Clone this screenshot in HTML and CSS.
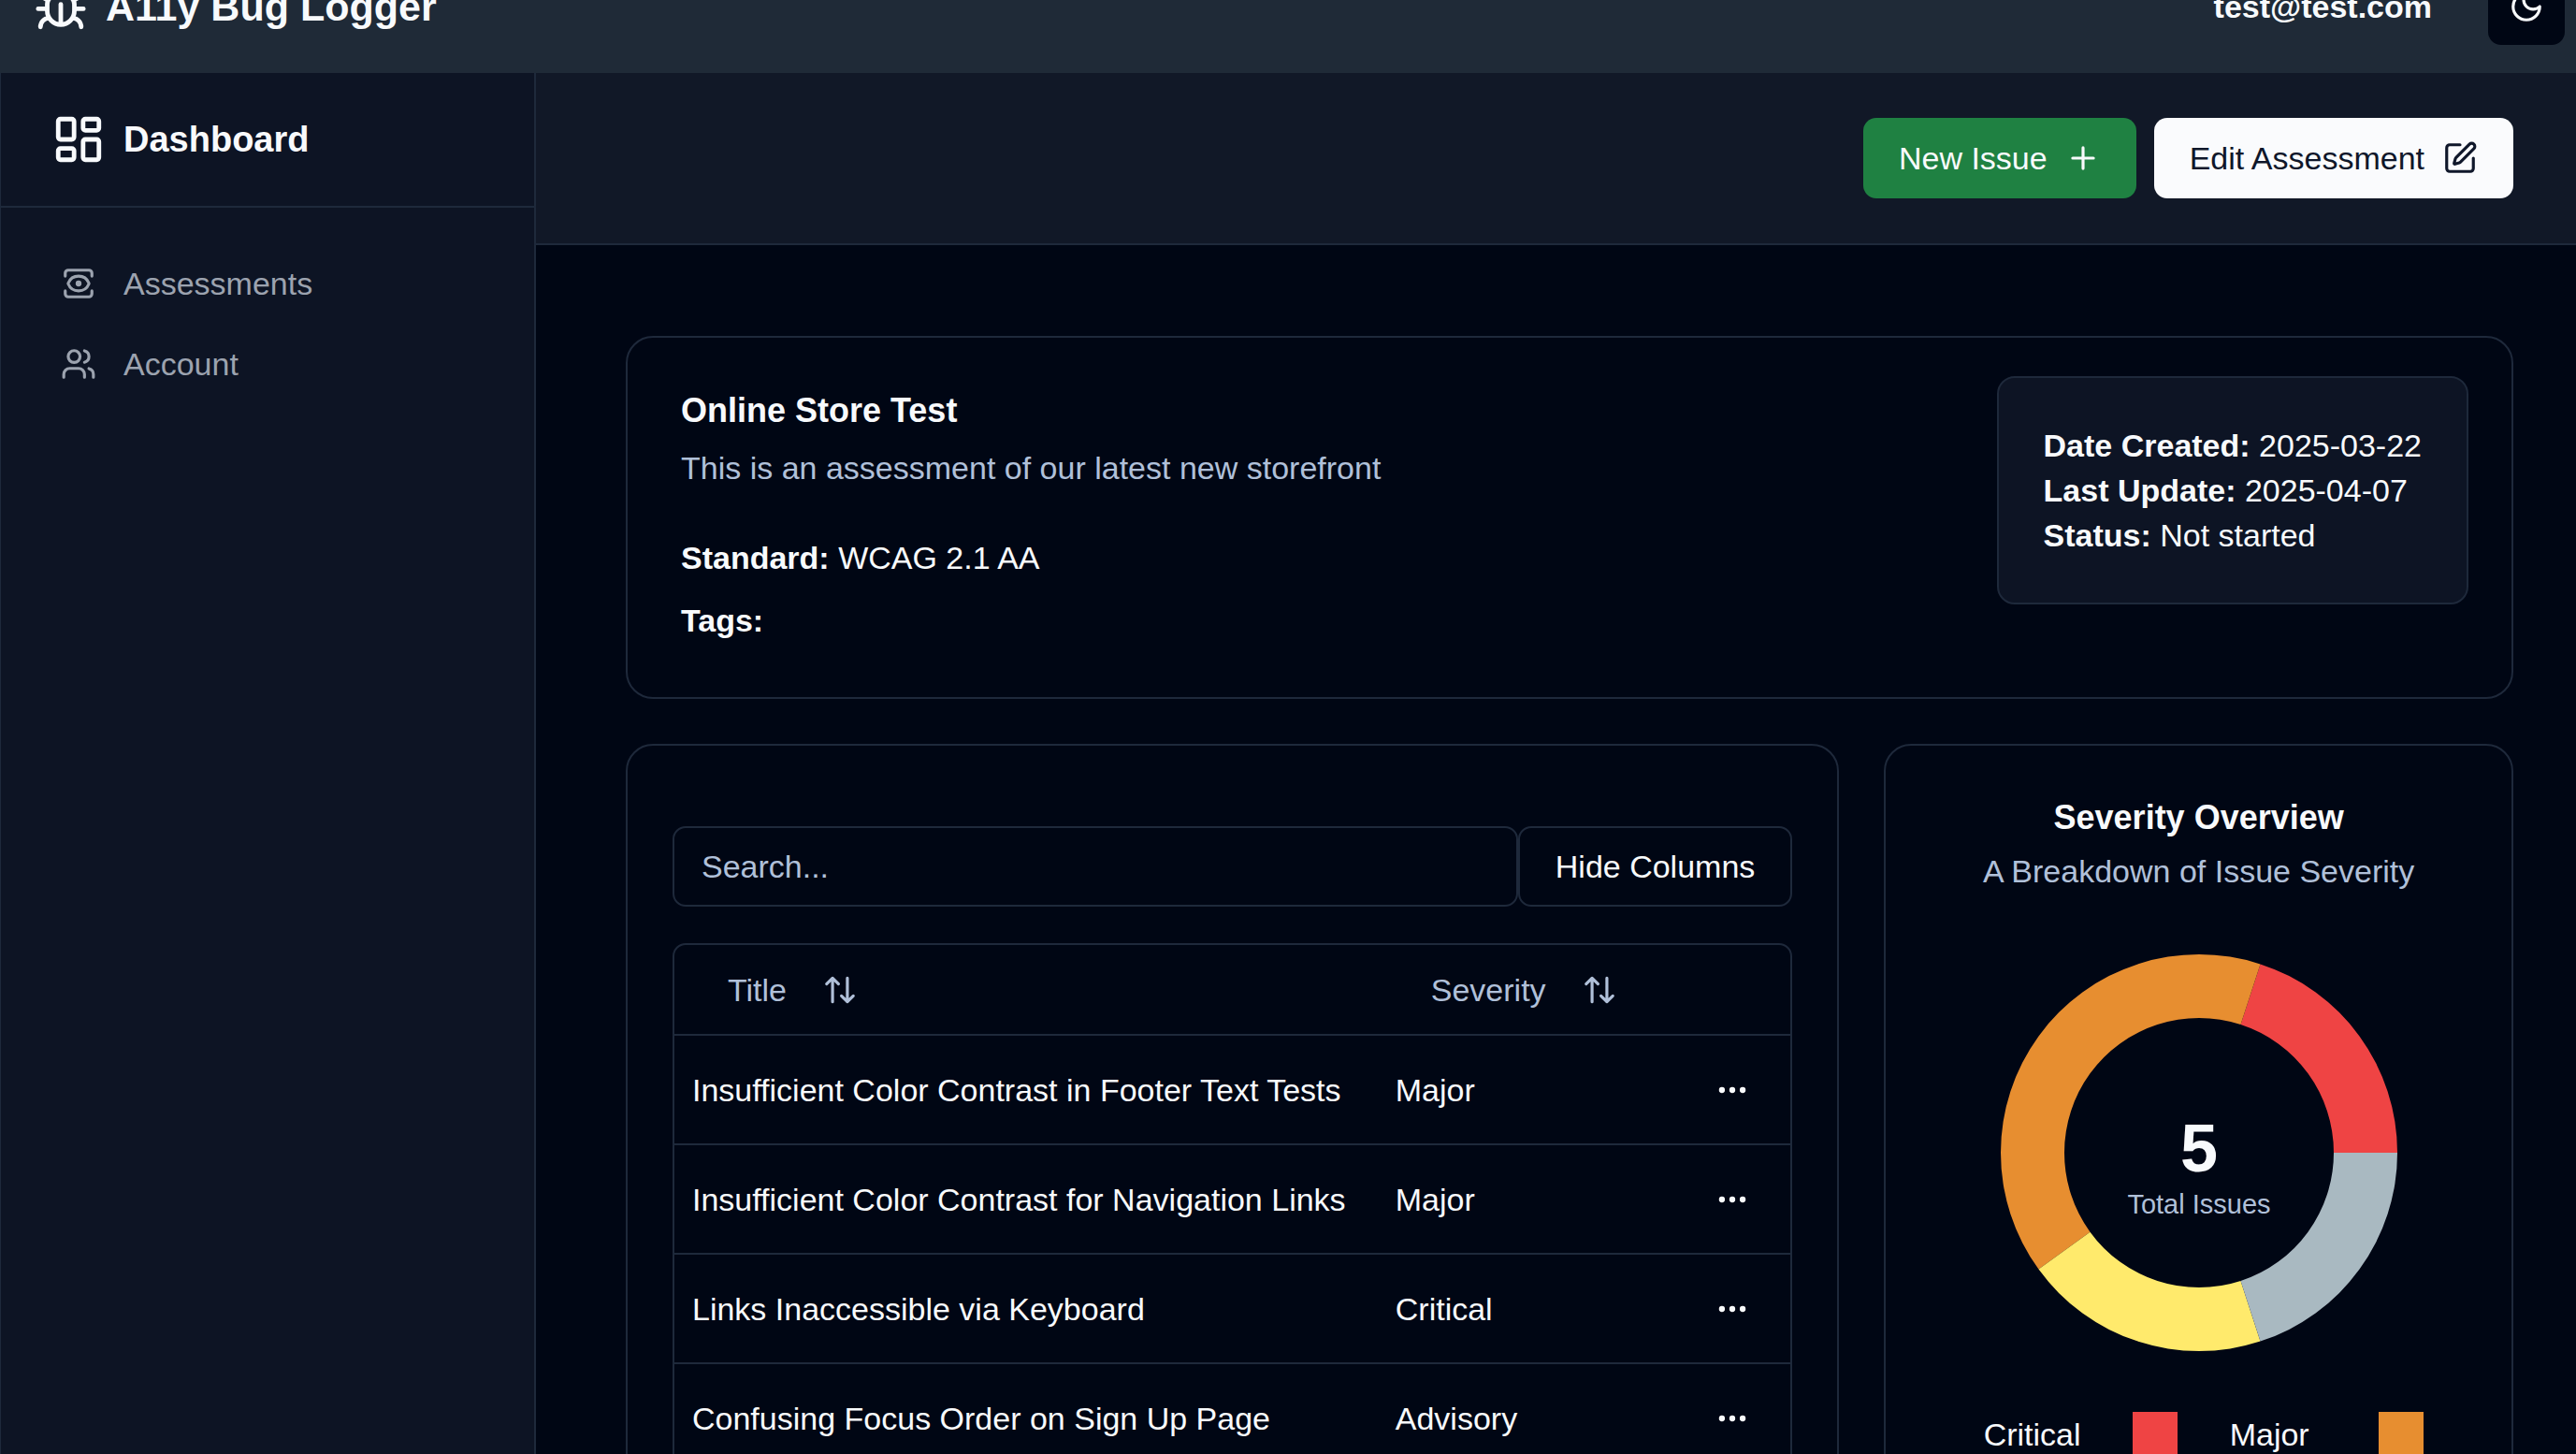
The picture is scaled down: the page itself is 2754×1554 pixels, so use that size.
FILE: index.html
```html
<!DOCTYPE html>
<html lang="en">
<head>
<meta charset="utf-8">
<title>A11y Bug Logger</title>
<link rel="stylesheet" href="styles.css">
</head>
<body>
<div class="shell">
  <header class="topbar">
    <div class="brand">
      <svg class="icon icon-lg" viewBox="0 0 24 24" aria-hidden="true"><path d="m8 2 1.880 1.880M14.120 3.880 16 2M9 7.130v-1a3.003 3.003 0 1 1 6 0v1"/><path d="M12 20c-3.300 0-6-2.700-6-6v-3a4 4 0 0 1 4-4h4a4 4 0 0 1 4 4v3c0 3.300-2.700 6-6 6M12 20v-9M6.530 9C4.600 8.800 3 7.100 3 5M6 13H2M3 21c0-2.100 1.700-3.900 3.800-4M20.970 5c0 2.100-1.600 3.800-3.500 4M22 13h-4M17.200 17c2.100.1 3.800 1.900 3.800 4"/></svg>
      <span class="brand-name">A11y Bug Logger</span>
    </div>
    <div class="user">
      <span class="user-email">test@test.com</span>
      <button class="theme-toggle" type="button" aria-label="Toggle theme">
        <svg class="icon" viewBox="0 0 24 24" aria-hidden="true"><path d="M12 3a6 6 0 0 0 9 9 9 9 0 1 1-9-9Z"/></svg>
      </button>
    </div>
  </header>

  <div class="workspace">
    <aside class="sidebar">
      <div class="sidebar-head">
        <svg class="icon icon-lg" viewBox="0 0 24 24" aria-hidden="true"><rect x="3" y="3" width="7" height="9" rx="1"/><rect x="14" y="3" width="7" height="5" rx="1"/><rect x="14" y="12" width="7" height="9" rx="1"/><rect x="3" y="16" width="7" height="5" rx="1"/></svg>
        <span>Dashboard</span>
      </div>
      <nav class="nav">
        <a class="nav-link" href="#assessments">
          <svg class="icon" viewBox="0 0 24 24" aria-hidden="true"><path d="M21 17v2a2 2 0 0 1-2 2H5a2 2 0 0 1-2-2v-2M21 7V5a2 2 0 0 0-2-2H5a2 2 0 0 0-2 2v2"/><circle cx="12" cy="12" r="1"/><path d="M18.944 12.330a1 1 0 0 0 0-.660 7.500 7.500 0 0 0-13.888 0 1 1 0 0 0 0 .660 7.500 7.500 0 0 0 13.888 0"/></svg>
          Assessments
        </a>
        <a class="nav-link" href="#account">
          <svg class="icon" viewBox="0 0 24 24" aria-hidden="true"><path d="M16 21v-2a4 4 0 0 0-4-4H6a4 4 0 0 0-4 4v2"/><circle cx="9" cy="7" r="4"/><path d="M22 21v-2a4 4 0 0 0-3-3.870M16 3.130a4 4 0 0 1 0 7.750"/></svg>
          Account
        </a>
      </nav>
    </aside>

    <main class="main">
      <div class="actions">
        <button class="btn btn-green" type="button">New Issue
          <svg class="icon" viewBox="0 0 24 24" aria-hidden="true"><path d="M5 12h14M12 5v14"/></svg>
        </button>
        <button class="btn btn-light" type="button">Edit Assessment
          <svg class="icon" viewBox="0 0 24 24" aria-hidden="true"><path d="M12 3H5a2 2 0 0 0-2 2v14a2 2 0 0 0 2 2h14a2 2 0 0 0 2-2v-7"/><path d="M18.375 2.625a1 1 0 0 1 3 3l-9.013 9.014a2 2 0 0 1-.853.505l-2.873.840a.5.5 0 0 1-.620-.620l.840-2.873a2 2 0 0 1 .506-.852z"/></svg>
        </button>
      </div>

      <div class="content">
        <section class="card summary">
          <div class="summary-text">
            <h1 class="card-title">Online Store Test</h1>
            <p class="summary-desc">This is an assessment of our latest new storefront</p>
            <p class="summary-standard"><b>Standard:</b> WCAG 2.1 AA</p>
            <p class="summary-tags"><b>Tags:</b></p>
          </div>
          <div class="meta">
            <p><b>Date Created:</b> 2025-03-22</p>
            <p><b>Last Update:</b> 2025-04-07</p>
            <p><b>Status:</b> Not started</p>
          </div>
        </section>

        <div class="columns">
          <section class="card issues">
            <div class="toolbar">
              <input class="search" type="text" placeholder="Search..." aria-label="Search issues">
              <button class="btn btn-outline" type="button">Hide Columns</button>
            </div>
            <div class="table-frame">
              <table class="table">
                <colgroup><col class="col-title"><col class="col-severity"><col class="col-menu"></colgroup>
                <thead>
                  <tr>
                    <th><button class="sort" type="button">Title <svg class="icon" viewBox="0 0 24 24" aria-hidden="true"><path d="m21 16-4 4-4-4M17 20V4M3 8l4-4 4 4M7 4v16"/></svg></button></th>
                    <th><button class="sort" type="button">Severity <svg class="icon" viewBox="0 0 24 24" aria-hidden="true"><path d="m21 16-4 4-4-4M17 20V4M3 8l4-4 4 4M7 4v16"/></svg></button></th>
                    <th></th>
                  </tr>
                </thead>
                <tbody>
                  <tr>
                    <td>Insufficient Color Contrast in Footer Text Tests</td><td>Major</td>
                    <td><button class="row-menu" type="button" aria-label="Open menu"><svg class="icon" viewBox="0 0 24 24" aria-hidden="true"><circle cx="12" cy="12" r="1"/><circle cx="19" cy="12" r="1"/><circle cx="5" cy="12" r="1"/></svg></button></td>
                  </tr>
                  <tr>
                    <td>Insufficient Color Contrast for Navigation Links</td><td>Major</td>
                    <td><button class="row-menu" type="button" aria-label="Open menu"><svg class="icon" viewBox="0 0 24 24" aria-hidden="true"><circle cx="12" cy="12" r="1"/><circle cx="19" cy="12" r="1"/><circle cx="5" cy="12" r="1"/></svg></button></td>
                  </tr>
                  <tr>
                    <td>Links Inaccessible via Keyboard</td><td>Critical</td>
                    <td><button class="row-menu" type="button" aria-label="Open menu"><svg class="icon" viewBox="0 0 24 24" aria-hidden="true"><circle cx="12" cy="12" r="1"/><circle cx="19" cy="12" r="1"/><circle cx="5" cy="12" r="1"/></svg></button></td>
                  </tr>
                  <tr>
                    <td>Confusing Focus Order on Sign Up Page</td><td>Advisory</td>
                    <td><button class="row-menu" type="button" aria-label="Open menu"><svg class="icon" viewBox="0 0 24 24" aria-hidden="true"><circle cx="12" cy="12" r="1"/><circle cx="19" cy="12" r="1"/><circle cx="5" cy="12" r="1"/></svg></button></td>
                  </tr>
                </tbody>
              </table>
            </div>
          </section>

          <section class="card overview">
            <h2 class="card-title">Severity Overview</h2>
            <p class="overview-sub">A Breakdown of Issue Severity</p>
            <svg class="donut" viewBox="-212 -212 424 424" role="img" aria-label="5 total issues by severity">
              <path class="fill-critical" d="M212 0A212 212 0 0 0 65.510-201.620L44.500-136.950A144 144 0 0 1 144 0Z"/>
              <path class="fill-major" d="M65.510-201.620A212 212 0 0 0-171.510 124.610L-116.500 84.640A144 144 0 0 1 44.500-136.950Z"/>
              <path class="fill-minor" d="M-171.510 124.610A212 212 0 0 0 65.510 201.620L44.500 136.950A144 144 0 0 1-116.500 84.640Z"/>
              <path class="fill-advisory" d="M65.510 201.620A212 212 0 0 0 212 0L144 0A144 144 0 0 1 44.500 136.950Z"/>
              <text class="donut-total" x="0" y="20">5</text>
              <text class="donut-label" x="0" y="65">Total Issues</text>
            </svg>
            <ul class="legend">
              <li>Critical <span class="swatch swatch-critical"></span></li>
              <li>Major <span class="swatch swatch-major"></span></li>
            </ul>
          </section>
        </div>
      </div>
    </main>
  </div>
</div>
</body>
</html>
```
FILE: styles.css
```css
:root {
  --bg: #000614;
  --bar: #111827;
  --side: #0d1424;
  --header: #1f2a37;
  --line: #1e293b;
  --text: #f8fafc;
  --muted: #b0c0d9;
  --nav: #9ca3af;
  --critical: #ef4444;
  --major: #e78e30;
  --minor: #ffea6c;
  --advisory: #a9b9c1;
}

* { box-sizing: border-box; }

body {
  margin: 0;
  background: var(--bg);
  color: var(--text);
  font-family: "Liberation Sans", Arial, sans-serif;
  font-size: 34px;
  line-height: 48px;
}

h1, h2, p, ul { margin: 0; padding: 0; }
button, input { font: inherit; color: inherit; }
button { border: 0; padding: 0; background: none; }

.icon {
  display: block;
  flex: none;
  width: 38px;
  height: 38px;
  fill: none;
  stroke: currentColor;
  stroke-width: 2;
  stroke-linecap: round;
  stroke-linejoin: round;
}
.icon-lg { width: 58px; height: 58px; }

.shell {
  display: flex;
  flex-direction: column;
  height: 100vh;
  overflow: hidden;
}

/* The top bar is partly scrolled out of view. */
.topbar {
  display: flex;
  flex: none;
  align-items: center;
  justify-content: space-between;
  height: 142px;
  margin-top: -64px;
  padding: 0 12px 0 36px;
  background: var(--header);
}
.brand { display: flex; align-items: center; gap: 19px; }
.brand-name { font-size: 43px; font-weight: 700; }
.user { display: flex; align-items: center; gap: 60px; }
.user-email { font-weight: 700; }
.theme-toggle {
  display: grid;
  place-items: center;
  width: 82px;
  height: 82px;
  border-radius: 14px;
  background: var(--bg);
}

.workspace { display: flex; flex: 1; min-height: 0; }

.sidebar {
  flex: none;
  width: 573px;
  border-left: 1px solid var(--line);
  border-right: 2px solid var(--line);
  background: var(--side);
}
.sidebar-head {
  display: flex;
  align-items: center;
  gap: 19px;
  height: 144px;
  padding-left: 54px;
  border-bottom: 2px solid var(--line);
  font-size: 38px;
  font-weight: 700;
}
.nav { padding: 38px 0; }
.nav-link {
  display: flex;
  align-items: center;
  gap: 29px;
  height: 86px;
  padding-left: 64px;
  color: var(--nav);
  text-decoration: none;
}

.main { flex: 1; min-width: 0; }
.actions {
  display: flex;
  justify-content: flex-end;
  gap: 19px;
  padding: 48px 67px;
  border-bottom: 2px solid var(--line);
  background: var(--bar);
}
.btn {
  display: flex;
  flex: none;
  align-items: center;
  gap: 19px;
  height: 86px;
  padding: 0 38px;
  border-radius: 14px;
}
.btn-green { background: #1f8142; }
.btn-light { background: #fafbfd; color: #0f172a; }
.btn-outline { border: 2px solid var(--line); }

.content {
  display: flex;
  flex-direction: column;
  gap: 48px;
  padding: 97px 67px 97px 96px;
}
.card {
  border: 2px solid var(--line);
  border-radius: 29px;
}
.card-title { font-size: 36px; line-height: 38px; }

.summary {
  display: flex;
  align-items: flex-start;
  justify-content: space-between;
  padding: 41px 46px 58px 57px;
}
.summary-text { padding-top: 18px; }
.summary-desc { margin-top: 18px; color: var(--muted); }
.summary-standard { margin-top: 48px; }
.summary-tags { margin-top: 19px; }
.meta {
  padding: 48px;
  border: 2px solid var(--line);
  border-radius: 19px;
  background: var(--side);
}

.columns {
  display: grid;
  grid-template-columns: minmax(0, 27fr) minmax(0, 14fr);
  gap: 48px;
}
.issues { padding: 86px 48px; }
.toolbar { display: flex; }
.search {
  flex: 1;
  min-width: 0;
  height: 86px;
  padding: 0 29px;
  border: 2px solid var(--line);
  border-radius: 14px;
  background: transparent;
}
.search::placeholder { color: var(--muted); opacity: 1; }
.table-frame {
  margin-top: 39px;
  border: 2px solid var(--line);
  border-radius: 14px;
}
.table {
  width: 100%;
  border-collapse: separate;
  border-spacing: 0;
  table-layout: fixed;
}
.col-title { width: 63%; }
.col-severity { width: 27%; }
.col-menu { width: 10%; }
.table th,
.table td {
  padding: 0 19px;
  border-bottom: 2px solid var(--line);
  text-align: left;
}
.table th { height: 97px; font-weight: 400; }
.table td { height: 117px; }
.sort {
  display: flex;
  align-items: center;
  gap: 38px;
  height: 86px;
  padding: 0 38px;
  color: var(--muted);
}
.row-menu {
  display: grid;
  place-items: center;
  width: 77px;
  height: 77px;
}

.overview {
  display: flex;
  flex-direction: column;
  align-items: center;
  padding: 58px;
}
.overview-sub { margin-top: 14px; color: var(--muted); }
.donut { width: 424px; height: 424px; margin-top: 65px; }
.fill-critical { fill: var(--critical); }
.fill-major { fill: var(--major); }
.fill-minor { fill: var(--minor); }
.fill-advisory { fill: var(--advisory); }
.donut-total {
  fill: var(--text);
  font-size: 72px;
  font-weight: 700;
  text-anchor: middle;
}
.donut-label { fill: var(--muted); font-size: 29px; text-anchor: middle; }
.legend {
  display: grid;
  grid-template-columns: 207px 207px;
  gap: 56px;
  margin-top: 65px;
  padding-left: 10px;
  list-style: none;
}
.legend li { display: flex; justify-content: space-between; }
.swatch { width: 48px; height: 48px; }
.swatch-critical { background: var(--critical); }
.swatch-major { background: var(--major); }
```
